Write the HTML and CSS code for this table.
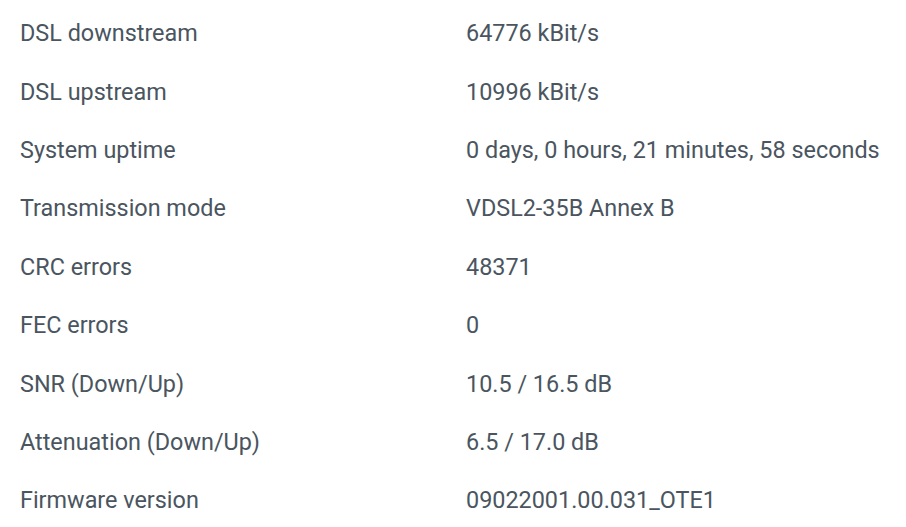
FILE: index.html
```html
<!DOCTYPE html>
<html>
<head>
<meta charset="utf-8">
<link rel="stylesheet" href="styles.css">
</head>
<body>
<div class="list">
  <div class="row"><span class="label">DSL downstream</span><span class="value">64776 kBit/s</span></div>
  <div class="row"><span class="label">DSL upstream</span><span class="value">10996 kBit/s</span></div>
  <div class="row"><span class="label">System uptime</span><span class="value">0 days, 0 hours, 21 minutes, 58 seconds</span></div>
  <div class="row"><span class="label">Transmission mode</span><span class="value">VDSL2-35B Annex B</span></div>
  <div class="row"><span class="label">CRC errors</span><span class="value">48371</span></div>
  <div class="row"><span class="label">FEC errors</span><span class="value">0</span></div>
  <div class="row"><span class="label">SNR (Down/Up)</span><span class="value">10.5 / 16.5 dB</span></div>
  <div class="row"><span class="label">Attenuation (Down/Up)</span><span class="value">6.5 / 17.0 dB</span></div>
  <div class="row"><span class="label">Firmware version</span><span class="value">09022001.00.031_OTE1</span></div>
</div>
</body>
</html>
```
FILE: styles.css
```css
html, body {
  margin: 0;
  padding: 0;
  background: #ffffff;
}
body {
  font-family: Roboto, "Noto Sans", sans-serif;
  font-size: 23.4px;
  color: #4a5560;
  width: 906px;
  height: 527px;
  overflow: hidden;
}
.list {
  padding: 4px 0 0 20px;
  display: flex;
  flex-direction: column;
}
.row {
  display: grid;
  grid-template-columns: 446px 1fr;
  align-items: center;
  height: 58.4px;
  white-space: nowrap;
}
```
